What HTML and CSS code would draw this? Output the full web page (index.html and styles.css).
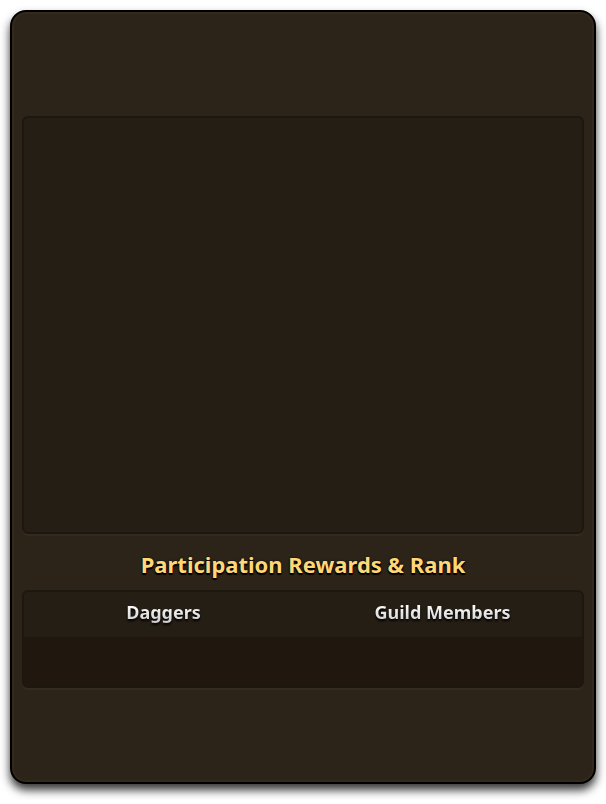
FILE: index.html
```html
<!DOCTYPE html>
<html lang="en">
<head>
<meta charset="utf-8">
<title>Participation Rewards &amp; Rank</title>
<link rel="stylesheet" href="styles.css">
</head>
<body>
<main class="card">
  <section class="panel board"></section>
  <h2 class="title">Participation Rewards &amp; Rank</h2>
  <section class="panel rewards">
    <table class="reward-table">
      <thead>
        <tr>
          <th scope="col"><span class="label">Daggers</span></th>
          <th scope="col"><span class="label">Guild Members</span></th>
        </tr>
      </thead>
      <tbody>
        <tr><td></td><td></td></tr>
      </tbody>
    </table>
  </section>
</main>
</body>
</html>
```
FILE: styles.css
```css
* {
  box-sizing: border-box;
}

body {
  margin: 0;
  padding: 10px 10px 20px;
  background: #fff;
  font-family: "Noto Sans", sans-serif;
}

.card {
  padding: 104px 10px 94px;
  border: 2px solid #000;
  border-radius: 16px;
  background: #2c2419;
  box-shadow: inset 0 0 0 2px #33291c, 0 6px 10px rgba(0, 0, 0, 0.8);
}

.panel {
  border: 2px solid #1c170f;
  border-radius: 6px;
  background: #251e15;
  box-shadow: 0 2px 0 #342a1f;
  overflow: hidden;
}

.board {
  height: 418px;
}

.title {
  margin: 15px 0 11px;
  color: #ffd777;
  font-size: 22px;
  font-weight: 700;
  line-height: 30px;
  text-align: center;
  text-shadow: 0 2px 1px #000, 0 1px 1px #000, 0 0 2px #000;
}

.reward-table {
  width: 100%;
  table-layout: fixed;
  border-collapse: collapse;
}

.reward-table th {
  height: 45px;
  padding: 0 0 6px;
  font-size: 18px;
  font-weight: 700;
  line-height: 24px;
  text-align: center;
}

.label {
  display: inline-block;
  color: transparent;
  background: linear-gradient(#fff 20%, #cfcfcf 90%);
  background-clip: text;
  -webkit-background-clip: text;
  filter: drop-shadow(0 2px 1px #000);
}

.reward-table td {
  height: 49px;
  padding: 0;
  background: #20180f;
}
```
